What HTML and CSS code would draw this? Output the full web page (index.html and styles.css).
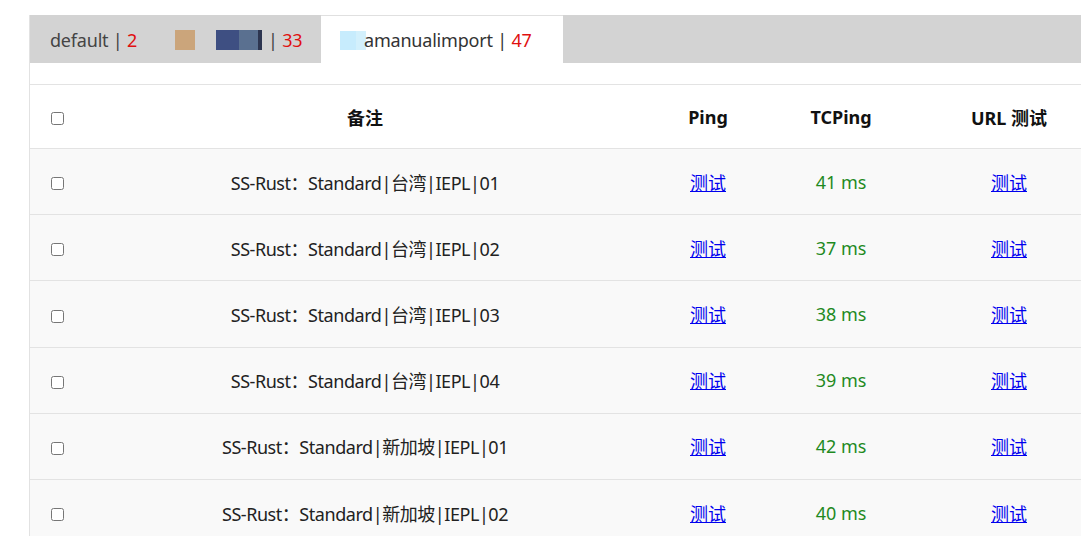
FILE: index.html
```html
<!DOCTYPE html>
<html lang="zh-CN">
<head>
<meta charset="utf-8">
<title>节点列表</title>
<link rel="stylesheet" href="styles.css">
</head>
<body>
<div class="panel">
  <div class="tabs">
    <div class="tab tab-first"><span class="label">default | <span class="num">2</span></span></div>
    <div class="tab tab-wide"><span class="blk blk-tan"></span><span class="blk blk-blue"></span><span class="label">| <span class="num">33</span></span></div>
    <div class="tab active"><span class="blk blk-light"></span><span class="label">amanualimport | <span class="num">47</span></span></div>
  </div>
  <div class="gap"></div>
  <table class="grid">
    <colgroup>
      <col class="c-check"><col class="c-name"><col class="c-ping"><col class="c-tcp"><col class="c-url">
    </colgroup>
    <thead>
      <tr><th><input type="checkbox"></th><th>备注</th><th>Ping</th><th>TCPing</th><th>URL 测试</th></tr>
    </thead>
    <tbody>
      <tr><td><input type="checkbox"></td><td class="name">SS-Rust：Standard|台湾|IEPL|01</td><td><a href="#">测试</a></td><td class="ms">41 ms</td><td><a href="#">测试</a></td></tr>
      <tr><td><input type="checkbox"></td><td class="name">SS-Rust：Standard|台湾|IEPL|02</td><td><a href="#">测试</a></td><td class="ms">37 ms</td><td><a href="#">测试</a></td></tr>
      <tr><td><input type="checkbox"></td><td class="name">SS-Rust：Standard|台湾|IEPL|03</td><td><a href="#">测试</a></td><td class="ms">38 ms</td><td><a href="#">测试</a></td></tr>
      <tr><td><input type="checkbox"></td><td class="name">SS-Rust：Standard|台湾|IEPL|04</td><td><a href="#">测试</a></td><td class="ms">39 ms</td><td><a href="#">测试</a></td></tr>
      <tr><td><input type="checkbox"></td><td class="name">SS-Rust：Standard|新加坡|IEPL|01</td><td><a href="#">测试</a></td><td class="ms">42 ms</td><td><a href="#">测试</a></td></tr>
      <tr><td><input type="checkbox"></td><td class="name">SS-Rust：Standard|新加坡|IEPL|02</td><td><a href="#">测试</a></td><td class="ms">40 ms</td><td><a href="#">测试</a></td></tr>
    </tbody>
  </table>
</div>
</body>
</html>
```
FILE: styles.css
```css
html, body {
  margin: 0;
  padding: 0;
  background: #fff;
  overflow: hidden;
}
body {
  font-family: "Noto Sans", "Noto Sans CJK SC", sans-serif;
  font-size: 18px;
  color: #222;
  padding-top: 15px;
}
.panel {
  margin-left: 29px;
  border-left: 1px solid #e2e2e2;
  width: 1100px;
}
.tabs {
  display: flex;
  height: 48px;
  background: #d3d3d3;
}
.tab {
  display: flex;
  align-items: center;
  box-sizing: border-box;
  padding: 2px 0 0 20px;
  color: #444;
  font-size: 18px;
  white-space: nowrap;
}
.label { letter-spacing: -0.2px; }
.tab-first { width: 125px; }
.tab-wide { width: 166px; }
.tab.active {
  background: #fff;
  width: 242px;
  padding-left: 19px;
  padding-top: 1px;
  border-top: 1px solid #e0e0e0;
  color: #333;
}
.num { color: #e01010; }
.blk { display: inline-block; height: 20px; flex: none; }
.blk-tan { width: 20px; background: #cba57b; margin-right: 21px; }
.blk-blue {
  width: 46px;
  background: linear-gradient(90deg, #3e4f82 0 50%, #5a7090 50% 92%, #2d3550 92%);
  margin-right: 6px;
}
.blk-light {
  width: 26px;
  height: 19px;
  background: linear-gradient(90deg, #c7ecfd 0 60%, #d3f0fc 60%);
  margin-right: -2px;
}
.gap { height: 21px; }
.grid {
  border-collapse: collapse;
  table-layout: fixed;
  width: 1077px;
  border-top: 1px solid #e3e3e3;
}
.c-check { width: 55px; }
.c-name { width: 560px; }
.c-ping { width: 126px; }
.c-tcp { width: 140px; }
.c-url { width: 196px; }
th, td {
  text-align: center;
  padding: 0;
  color: #222;
}
th {
  height: 63px;
  font-weight: bold;
  color: #111;
  background: #fff;
  border-bottom: 1px solid #e3e3e3;
}
td {
  height: 65.2px;
  background: #f9f9f9;
  border-bottom: 1px solid #e3e3e3;
}
td.name { letter-spacing: -0.45px; }
input[type="checkbox"] { margin: 0; width: 13px; height: 13px; vertical-align: middle; }
a { color: #0000ee; text-decoration: underline; }
.ms { color: #1f8a1f; }
```
